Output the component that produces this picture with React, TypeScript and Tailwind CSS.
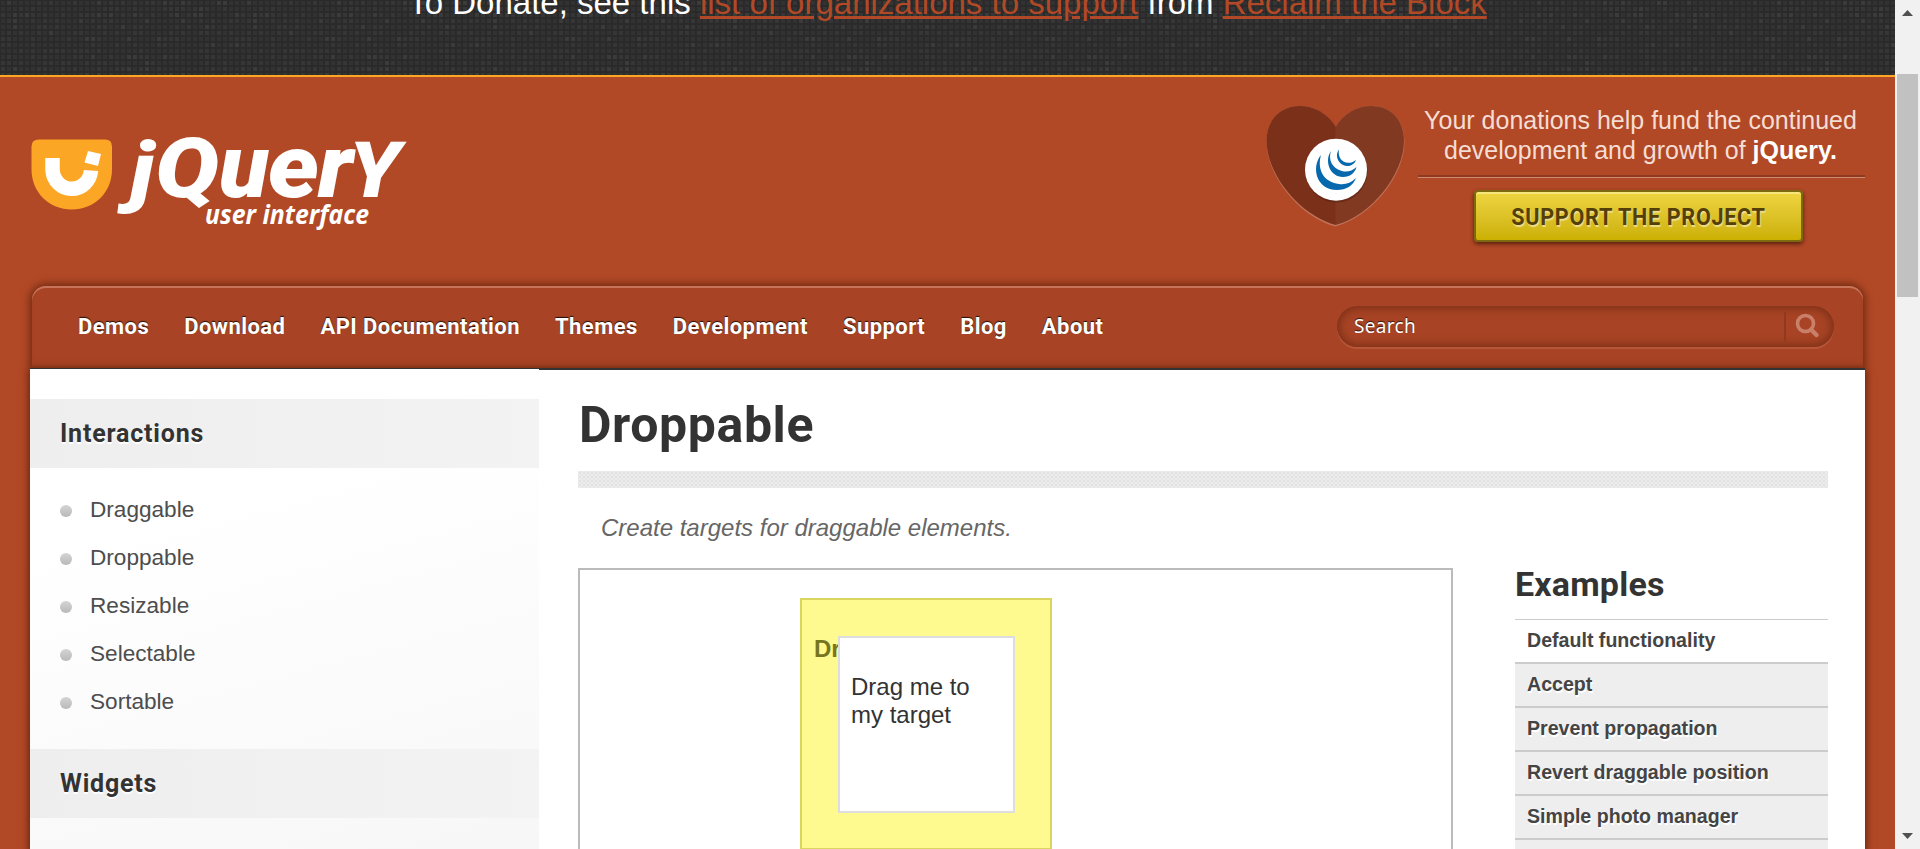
import React from "react";

const NAV = ["Demos", "Download", "API Documentation", "Themes", "Development", "Support", "Blog", "About"];
const INTERACTIONS = ["Draggable", "Droppable", "Resizable", "Selectable", "Sortable"];
const EXAMPLES = [
  "Default functionality",
  "Accept",
  "Prevent propagation",
  "Revert draggable position",
  "Simple photo manager",
  "Visual feedback",
];

// Deterministic light cells for the banner's mosaic texture.
const CELLS = Array.from({ length: 40 * 13 }, (_, i) => {
  const v = Math.abs(Math.sin(i * 12.9898) * 43758.5453) % 1;
  return { x: (i % 40) * 6, y: Math.floor(i / 40) * 6, fill: v > 0.9 ? "#3b3b3b" : v > 0.6 ? "#363636" : "#323232" };
});

function Mosaic() {
  return (
    <svg className="absolute inset-0 h-full w-full" aria-hidden="true">
      <defs>
        <pattern id="mosaic" width="240" height="78" patternUnits="userSpaceOnUse">
          <rect width="240" height="78" fill="#2a2a2a" />
          {CELLS.map((c, i) => (
            <rect key={i} x={c.x + 1} y={c.y + 1} width="4" height="4" fill={c.fill} />
          ))}
        </pattern>
      </defs>
      <rect width="100%" height="100%" fill="url(#mosaic)" />
    </svg>
  );
}

function Logo() {
  return (
    <svg className="h-[100px] w-[380px]" viewBox="31 135 380 100" role="img" aria-label="jQuery user interface">
      <path
        d="M39 139.5H105Q112 139.5 112 146.5V169C112 193 94 209.5 71.700 209.500S31.500 193 31.500 169V146.500Q31.500 139.500 39 139.500Z"
        fill="#fca626"
      />
      <path d="M52.500 158V170A19.300 20 0 0 0 91 170.500" fill="none" stroke="#fff" strokeWidth="14.500" />
      <path d="M88 151L101 154L98 166L84.500 162.500Z" fill="#fff" />
      <g fill="#fff" fontFamily="Roboto, sans-serif" fontWeight="900" fontStyle="italic">
        <text x="130" y="197" fontSize="77" textLength="24" lengthAdjust="spacingAndGlyphs">j</text>
        <text x="155" y="197" fontSize="83" textLength="64" lengthAdjust="spacingAndGlyphs">Q</text>
        <text x="219" y="197" fontSize="88" textLength="50" lengthAdjust="spacingAndGlyphs">u</text>
        <text x="268" y="197" fontSize="88" textLength="51" lengthAdjust="spacingAndGlyphs">e</text>
        <text x="318" y="197" fontSize="88" textLength="35" lengthAdjust="spacingAndGlyphs">r</text>
        <text x="349" y="197" fontSize="77" textLength="51" lengthAdjust="spacingAndGlyphs">Y</text>
      </g>
      <text
        x="205"
        y="224"
        fill="#fff"
        fontFamily="'Open Sans', sans-serif"
        fontWeight="700"
        fontStyle="italic"
        fontSize="27"
        textLength="164"
        lengthAdjust="spacingAndGlyphs"
      >
        user interface
      </text>
    </svg>
  );
}

function Heart() {
  return (
    <svg className="h-[124px] w-[140px]" viewBox="1266 105 140 124" aria-hidden="true">
      <path
        d="M1335.500 127C1327 113 1314 106 1300 106C1278 106 1266.500 122 1266.500 142C1266.500 176 1300 217 1335.500 226.500C1371 217 1404.500 176 1404.500 142C1404.500 122 1393 106 1371 106C1357 106 1344 113 1335.500 127Z"
        fill="#c07259"
      />
      <path
        d="M1336 127C1327 113 1314 106 1300 106C1278 106 1266.500 122 1266.500 141C1266.500 174 1300 216 1336 225Z"
        fill="#7b301a"
      />
      <path
        d="M1335.500 127C1344 113 1357 106 1371 106C1393 106 1404 122 1404 141C1404 174 1371 216 1335.500 225Z"
        fill="#823922"
      />
      <circle cx="1336.500" cy="171.500" r="31" fill="#4d1c0d" opacity="0.45" />
      <circle cx="1336" cy="169.700" r="31" fill="#fff" />
      <g fill="#0769ad">
        <path d="M1321 155C1311 167 1316 190 1337 190C1346 190 1353 186 1356 178C1351 183 1345 185 1339 184C1323 182 1317 169 1321 155Z" />
        <path d="M1331 151C1324 161 1330 177 1343 177C1350 177 1355 173 1356.500 167C1352 171 1347 172.500 1342 171C1332 168 1328 160 1331 151Z" />
        <path d="M1339 149.500C1334 156 1339 165.500 1347 166C1351 166 1354.500 164 1356 160C1352 163 1349 163.200 1346 162.500C1340 161 1338 155 1339 149.500Z" />
      </g>
    </svg>
  );
}

function SideHeading({ children }: { children: React.ReactNode }) {
  return (
    <h3 className="flex h-[69px] items-center bg-linear-to-r from-[#eeeeee] to-[#f3f3f3] pl-[30px] font-[Roboto,sans-serif] text-[25px] font-bold tracking-[0.8px] text-[#333] [text-shadow:0_2px_0_#fff]">
      {children}
    </h3>
  );
}

function Scrollbar() {
  return (
    <div className="flex w-[25px] shrink-0 flex-col items-center bg-[#f1f1f1]">
      <svg className="h-[26px] w-[13px]" viewBox="0 0 13 26" aria-hidden="true">
        <path d="M1 16L6.500 10L12 16Z" fill="#505050" />
      </svg>
      <div className="mt-[48px] h-[223px] w-[21px] bg-[#c1c1c1]" />
      <svg className="mt-auto h-[26px] w-[13px]" viewBox="0 0 13 26" aria-hidden="true">
        <path d="M1 10L6.500 16L12 10Z" fill="#505050" />
      </svg>
    </div>
  );
}

export default function App() {
  return (
    <div className="flex h-[849px] w-full overflow-hidden bg-[#b24926] font-['Liberation_Sans',Arial,sans-serif]">
      <div className="flex min-w-0 flex-1 flex-col">
        <div className="relative h-[77px] shrink-0 overflow-hidden border-b-2 border-[#fca626] bg-[#2d2d2d]">
          <Mosaic />
          <p className="relative -mt-[17px] text-center text-[33px] leading-[40px] whitespace-nowrap text-white">
            To Donate, see this <a className="text-[#b24926] underline">list of organizations to support</a> from{" "}
            <a className="text-[#b24926] underline">Reclaim the Block</a>
          </p>
        </div>

        <header className="flex h-[209px] shrink-0 items-start pr-[30px] pl-[31px]">
          <div className="pt-[58px]">
            <Logo />
          </div>
          <div className="ml-auto flex pt-[28px]">
            <Heart />
            <div className="ml-[12px] flex w-[447px] flex-col items-center">
              <p className="mr-[2px] text-center text-[25px] leading-[30px] whitespace-nowrap text-[#f4ddd4]">
                Your donations help fund the continued
                <br />
                development and growth of <b className="text-white">jQuery.</b>
              </p>
              <div className="mt-[10px] h-[3px] w-full border-t-2 border-b border-t-[#8f3a1e] border-b-[#cd8a74]" />
              <a className="mt-[12px] mr-[6px] flex h-[52px] w-[329px] items-center justify-center rounded-[4px] border-2 border-[#7d6a10] bg-linear-to-b from-[#efd53f] to-[#ccb000] pt-[2px] font-[Roboto,sans-serif] text-[24.5px] font-bold text-[#533f07] shadow-[0_2px_4px_rgba(60,20,5,0.8),inset_0_2px_0_#f6e67c] [text-shadow:1px_2px_1px_#eedd8c]">
                <span className="block w-[252px] text-center whitespace-nowrap">
                  <span className="-mx-[20px] inline-block scale-x-[0.88] tracking-[0.8px]">SUPPORT THE PROJECT</span>
                </span>
              </a>
            </div>
          </div>
        </header>

        <div className="mx-[30px] flex min-h-0 flex-1 flex-col">
          <nav className="mx-[2px] flex h-[82px] shrink-0 items-center rounded-t-[14px] bg-[#a84425] pr-[29px] pb-[1px] pl-[46px] shadow-[0_0_8px_2px_#6c2912,inset_0_2px_0_#c8745a,inset_0_-4px_5px_-3px_#8a3419]">
            <ul className="flex gap-[35px] font-[Roboto,sans-serif] text-[22px] font-bold tracking-[0.45px] whitespace-nowrap text-white [text-shadow:0_-1px_1px_rgba(0,0,0,0.8)]">
              {NAV.map((n) => (
                <li key={n}>{n}</li>
              ))}
            </ul>
            <div className="mb-[1px] ml-auto flex h-[41px] w-[497px] items-center rounded-full bg-[#a84425] pr-[14px] pl-[17px] shadow-[inset_0_0_10px_2px_#7a2e16,0_2px_0_#b6573a]">
              <span className="font-['Noto_Sans',sans-serif] text-[19px] tracking-[0.3px] text-white [text-shadow:0_-1px_1px_rgba(0,0,0,0.7)]">
                Search
              </span>
              <div className="ml-auto h-[29px] w-[2px] bg-[#8f391e]" />
              <svg className="ml-[8px] h-[26px] w-[26px]" viewBox="0 0 26 26" fill="none" stroke="#c9806a" aria-hidden="true">
                <circle cx="11.500" cy="10.500" r="8" strokeWidth="3.600" />
                <path d="M17 16.500L22.500 22" strokeWidth="4.400" strokeLinecap="round" />
              </svg>
            </div>
          </nav>

          <div className="relative flex min-h-0 flex-1 bg-white shadow-[0_3px_8px_1px_#5a200c]">
            <aside className="w-[509px] shrink-0 border-t border-[#333] bg-linear-165 from-white from-30% to-[#f7f7f7]">
              <div className="h-[30px]" />
              <SideHeading>Interactions</SideHeading>
              <ul className="pt-[18px] pb-[23px] pl-[30px] text-[22.6px] text-[#4d4d4d]">
                {INTERACTIONS.map((n) => (
                  <li key={n} className="flex h-[48px] items-center pb-[1px]">
                    <span className="mt-[2px] mr-[18px] h-[12px] w-[12px] rounded-full bg-linear-to-b from-[#d4d4d4] to-[#b9b9b9]" />
                    {n}
                  </li>
                ))}
              </ul>
              <SideHeading>Widgets</SideHeading>
            </aside>

            <main className="min-w-0 flex-1 border-t-2 border-[#333] pt-[25px] pr-[37px] pl-[39px]">
              <h1 className="h-[60px] pl-[1px] font-[Roboto,sans-serif] text-[50px] leading-[60px] font-bold tracking-[0.6px] text-[#333]">
                Droppable
              </h1>
              <div className="mt-[16px] h-[17px] bg-[#ececec] bg-[radial-gradient(circle,#e2e2e2_0.8px,transparent_1.3px),radial-gradient(circle,#e4e4e4_0.6px,transparent_1.1px)] bg-size-[4px_4px] bg-position-[0_0,2px_2px]" />
              <p className="mt-[20px] h-[40px] pl-[23px] text-[24px] leading-[40px] text-[#666] italic">
                Create targets for draggable elements.
              </p>
              <div className="mt-[20px] flex gap-[62px]">
                <div className="relative h-[400px] w-[875px] shrink-0 border-2 border-[#bbb]">
                  <div className="absolute top-[28px] left-[220px] h-[252px] w-[252px] border-2 border-[#dad55e] bg-[#fffa90] pt-[35px] pl-[12px] text-[24px] leading-[28px] font-bold text-[#777620]">
                    Dropped!
                  </div>
                  <div className="absolute top-[66px] left-[258px] h-[177px] w-[177px] border-2 border-[#ddd] bg-white pt-[35px] pr-2 pl-[11px] text-[24px] leading-[28px] text-[#333]">
                    Drag me to my target
                  </div>
                </div>
                <aside className="min-w-0 flex-1">
                  <h2 className="h-[33px] font-[Roboto,sans-serif] text-[34px] leading-[33px] font-bold tracking-[0.2px] text-[#333]">
                    Examples
                  </h2>
                  <ul className="mt-[18px] border-t border-[#ccc] text-[19.6px] font-bold text-[#444]">
                    {EXAMPLES.map((n, i) => (
                      <li
                        key={n}
                        className={
                          i === 0
                            ? "flex h-[42px] items-center bg-white pl-[12px]"
                            : "flex h-[44px] items-center border-t-2 border-[#ccc] bg-[#eee] pl-[12px] [text-shadow:1px_2px_0_#fff]"
                        }
                      >
                        {n}
                      </li>
                    ))}
                  </ul>
                </aside>
              </div>
            </main>
          </div>
        </div>
      </div>
      <Scrollbar />
    </div>
  );
}
